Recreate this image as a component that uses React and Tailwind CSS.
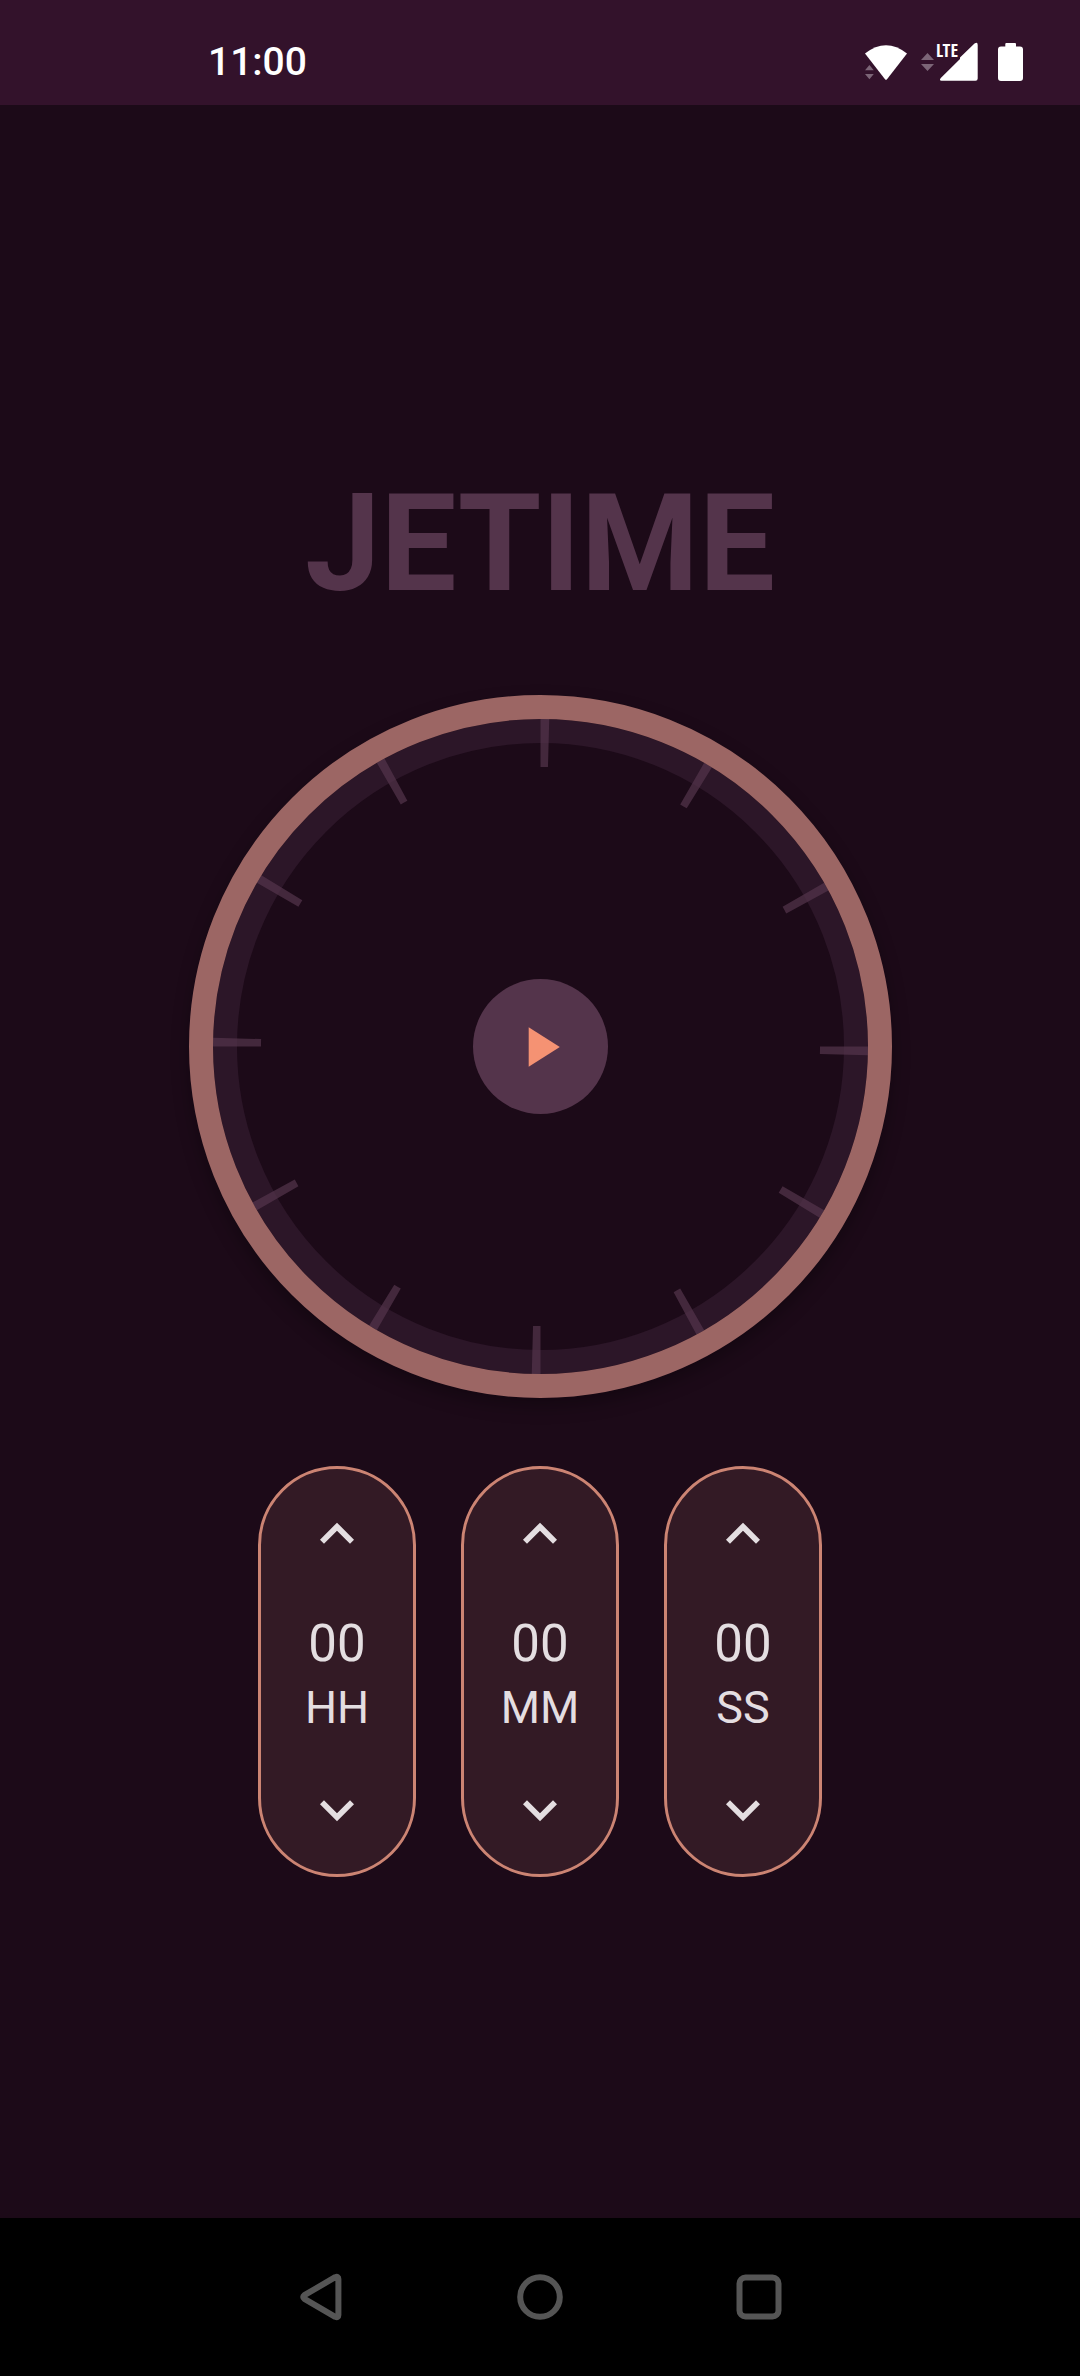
const UNITS = [
  { code: "HH", name: "hours" },
  { code: "MM", name: "minutes" },
  { code: "SS", name: "seconds" },
];

function StatusBar() {
  return (
    <header className="flex h-[105px] shrink-0 items-center justify-between bg-[#33122b] pt-[18px] pr-14 pl-52 text-white">
      <time className="text-[39px] leading-[46px] font-medium">11:00</time>
      <div className="flex items-center">
        <svg className="mr-3 h-10 w-11" viewBox="864 42 44 40" role="img" aria-label="Wi-Fi">
          <path fill="#fff" d="M865 53.5Q886 37 907 53.5L887 79.3Q886 80.3 885 79.3Z" />
          <path fill="#7c6577" d="M865 70.3L869.4 65L873.8 70.3ZM865 74L869.4 79.2L873.8 74Z" />
        </svg>
        <div className="relative mr-5">
          <svg className="h-10 w-[58px]" viewBox="920 42 58 40" role="img" aria-label="Mobile signal">
            <path fill="#7c6577" d="M921 60L927.5 53L934 60ZM921 64L927.5 71L934 64Z" />
            <path fill="#fff" d="M960 59V57.5L974.5 43.6Q977.7 41.6 977.7 45V78.5Q977.7 80.7 975.5 80.7H941.5Q938.8 80.7 940.8 78L959.5 59.5Z" />
          </svg>
          <span className="absolute top-0 left-4 font-['Liberation_Sans_Narrow','Open_Sans_Condensed','Roboto_Condensed','Roboto',sans-serif] text-[18px] leading-4 font-bold">
            LTE
          </span>
        </div>
        <svg className="h-10 w-[26px]" viewBox="998 42 26 40" role="img" aria-label="Battery full">
          <path fill="#fff" d="M1005.3 46.5V44Q1005.3 43 1006.3 43H1015Q1016 43 1016 44V46.5H1020Q1023 46.5 1023 49.5V78Q1023 81 1020 81H1001Q998 81 998 78V49.5Q998 46.5 1001 46.5Z" />
        </svg>
      </div>
    </header>
  );
}

function Dial() {
  return (
    <div className="grid size-[703px] place-items-center rounded-full shadow-[0_8px_18px_rgba(0,0,0,0.3)]">
      <svg className="col-start-1 row-start-1 size-full" viewBox="0 0 703 703" aria-hidden="true">
        <circle cx="351.5" cy="351.5" r="351" fill="#1c0a18" />
        <circle cx="351.5" cy="351.5" r="315.5" fill="none" stroke="#2c1628" strokeWidth="24" />
        <circle
          cx="351.5"
          cy="351.5"
          r="303.5"
          fill="none"
          stroke="#54344b"
          strokeOpacity="0.7"
          strokeWidth="48"
          pathLength="360"
          strokeDasharray="1.55 28.45"
          transform="rotate(-90 351.5 351.5)"
        />
        <circle cx="351.5" cy="351.5" r="339.5" fill="none" stroke="#9c6664" strokeWidth="24" />
      </svg>
      <button
        type="button"
        aria-label="Start"
        className="z-10 col-start-1 row-start-1 grid size-[135px] place-items-center rounded-full bg-[#54344b]"
      >
        <svg className="size-[68px]" viewBox="0 0 24 24" fill="#f59273" aria-hidden="true">
          <path d="M8 5v14l11-7z" />
        </svg>
      </button>
    </div>
  );
}

function StepButton({ label, d }) {
  return (
    <button type="button" aria-label={label}>
      <svg className="size-[68px]" viewBox="0 0 24 24" fill="currentColor" aria-hidden="true">
        <path d={d} />
      </svg>
    </button>
  );
}

function UnitPicker({ code, name }) {
  return (
    <section
      aria-label={name}
      className="flex w-[158px] flex-col items-center rounded-full border-3 border-[#cc8473] bg-[#331a25] pt-[31px] pb-[30px] text-[#e4dee1]"
    >
      <StepButton label={`Increase ${name}`} d="M7.41 15.41 12 10.83l4.59 4.58L18 14l-6-6-6 6z" />
      <div className="mt-11 mb-9 flex flex-col text-center leading-[64px]">
        <span className="text-[51px] leading-[64px]">00</span>
        <span className="text-[45px] leading-[64px]">{code}</span>
      </div>
      <StepButton label={`Decrease ${name}`} d="M7.41 8.59 12 13.17l4.59-4.58L18 10l-6 6-6-6z" />
    </section>
  );
}

function NavBar() {
  const item = "flex w-[219px] items-center justify-center";
  return (
    <nav className="flex h-[158px] shrink-0 justify-center bg-black text-[#555]">
      <button type="button" aria-label="Back" className={item}>
        <svg className="size-12" viewBox="0 0 48 48" fill="none" stroke="currentColor" strokeWidth="6" strokeLinejoin="round" aria-hidden="true">
          <path d="M7.4 22.2 38.2 4.2Q41.4 3 41.4 6V42Q41.4 45 38.2 43.8L7.4 25.8Q5 24 7.4 22.2Z" />
        </svg>
      </button>
      <button type="button" aria-label="Home" className={item}>
        <svg className="size-12" viewBox="0 0 48 48" fill="none" stroke="currentColor" strokeWidth="6" aria-hidden="true">
          <circle cx="24" cy="24" r="19.8" />
        </svg>
      </button>
      <button type="button" aria-label="Recent apps" className={item}>
        <svg className="size-12" viewBox="0 0 48 48" fill="none" stroke="currentColor" strokeWidth="6" aria-hidden="true">
          <rect x="4.5" y="4.5" width="39" height="39" rx="6" />
        </svg>
      </button>
    </nav>
  );
}

export default function App() {
  return (
    <div className="flex min-h-screen flex-col bg-[#1c0a18] font-['Roboto',sans-serif]">
      <StatusBar />
      <main className="flex flex-1 flex-col items-center justify-center pt-[18px]">
        <h1 className="text-[135px] leading-[160px] font-bold text-[#54344b]">JETIME</h1>
        <div className="mt-[71px] mb-[68px]">
          <Dial />
        </div>
        <div className="flex gap-[45px]">
          {UNITS.map((unit) => (
            <UnitPicker key={unit.code} {...unit} />
          ))}
        </div>
      </main>
      <NavBar />
    </div>
  );
}
